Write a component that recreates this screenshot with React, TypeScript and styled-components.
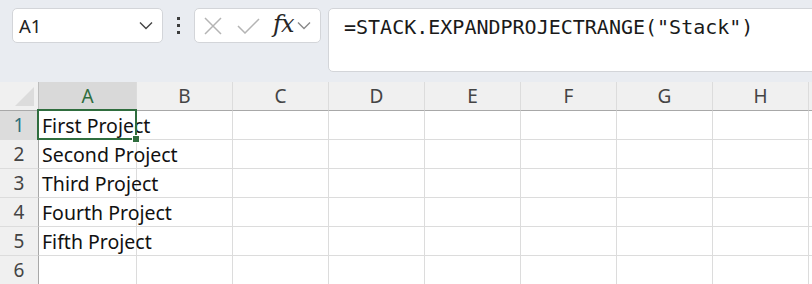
import React from 'react';
import styled, { createGlobalStyle } from 'styled-components';

const GlobalStyle = createGlobalStyle`
    html, body {
        margin: 0;
        padding: 0;
        background: #ffffff;
        overflow: hidden;
    }
    body {
        font-family: 'Noto Sans', 'Segoe UI', sans-serif;
    }
`;

const COLUMNS = ['A', 'B', 'C', 'D', 'E', 'F', 'G', 'H'];
const ROWS = ['First Project', 'Second Project', 'Third Project', 'Fourth Project', 'Fifth Project', ''];

const ChevronDown = ({ color = '#444' }: { color?: string }) => (
    <svg width="14" height="9" viewBox="0 0 14 9">
        <path d="M1 1.5 L7 7.5 L13 1.5" fill="none" stroke={color} strokeWidth="1.4" />
    </svg>
);

const App = () => {
    return (
        <>
            <GlobalStyle />
            <Page>
                <Toolbar>
                    <NameBox>
                        <span>A1</span>
                        <ChevronDown />
                    </NameBox>
                    <Dots>
                        <i />
                        <i />
                        <i />
                    </Dots>
                    <FormulaControls>
                        <svg width="18" height="18" viewBox="0 0 18 18">
                            <path d="M1 1 L17 17 M17 1 L1 17" stroke="#b4b4b4" strokeWidth="1.5" fill="none" />
                        </svg>
                        <svg width="23" height="16" viewBox="0 0 23 16">
                            <path d="M1 8 L8 15 L22 1" stroke="#b4b4b4" strokeWidth="1.5" fill="none" />
                        </svg>
                        <Fx>fx</Fx>
                        <ChevronDown color="#8a8a8a" />
                    </FormulaControls>
                    <FormulaInput>=STACK.EXPANDPROJECTRANGE("Stack")</FormulaInput>
                </Toolbar>

                <Sheet>
                    <Corner>
                        <Triangle />
                    </Corner>
                    {COLUMNS.map((col) => (
                        <ColHeader key={col} $active={col === 'A'}>
                            {col}
                        </ColHeader>
                    ))}
                    <ColHeader />
                    {ROWS.map((text, r) => (
                        <React.Fragment key={r}>
                            <RowHeader $active={r === 0}>{r + 1}</RowHeader>
                            {COLUMNS.map((col) => (
                                <Cell key={col}>
                                    {col === 'A' && text}
                                    {col === 'A' && r === 0 && (
                                        <Selection>
                                            <Handle />
                                        </Selection>
                                    )}
                                </Cell>
                            ))}
                            <Cell />
                        </React.Fragment>
                    ))}
                </Sheet>
            </Page>
        </>
    );
};

const Page = styled.div`
    width: 812px;
    height: 284px;
    overflow: hidden;
    display: flex;
    flex-direction: column;
`;

const Toolbar = styled.div`
    height: 82px;
    box-sizing: border-box;
    padding: 8px 0 0 12px;
    background: #e9ecf1;
    display: flex;
    align-items: flex-start;
    flex-shrink: 0;

    & > * {
        flex-shrink: 0;
    }
`;

const NameBox = styled.div`
    width: 151px;
    height: 35px;
    box-sizing: border-box;
    background: #fff;
    border: 1px solid #d3d5d9;
    border-radius: 5px;
    display: flex;
    align-items: center;
    justify-content: space-between;
    padding: 0 9px 0 6px;

    span {
        font-size: 18.5px;
        color: #222;
    }
`;

const Dots = styled.div`
    width: 31px;
    height: 35px;
    display: flex;
    flex-direction: column;
    align-items: center;
    justify-content: center;
    gap: 4px;

    i {
        display: block;
        width: 3px;
        height: 3px;
        background: #3c3c3c;
    }
`;

const FormulaControls = styled.div`
    width: 127px;
    height: 35px;
    box-sizing: border-box;
    background: #fff;
    border: 1px solid #d3d5d9;
    border-radius: 5px;
    display: flex;
    align-items: center;
    padding: 0 4px 0 9px;

    svg:nth-child(1) {
        margin-right: 15px;
    }
    svg:nth-child(2) {
        margin-right: 13px;
    }
`;

const Fx = styled.span`
    font-family: 'DejaVu Serif', 'Liberation Serif', serif;
    font-style: italic;
    font-size: 24px;
    color: #262626;
    margin-right: 4px;
    line-height: 1;
    padding-bottom: 3px;
    letter-spacing: -1px;
`;

const FormulaInput = styled.div`
    margin-left: 7px;
    width: 520px;
    height: 64px;
    box-sizing: border-box;
    background: #fff;
    border: 1px solid #d3d5d9;
    border-radius: 5px;
    padding: 6px 0 0 15px;
    font-family: 'DejaVu Sans Mono', 'Liberation Mono', monospace;
    font-size: 20px;
    color: #1a1a1a;
    white-space: nowrap;
`;

const Sheet = styled.div`
    display: grid;
    grid-template-columns: 39px 98px repeat(7, 96px) 1fr;
    grid-auto-rows: 29px;
    grid-template-rows: 29px;
    background: #fff;
`;

const HeaderBase = styled.div`
    background: #f0f0f0;
    box-sizing: border-box;
    display: flex;
    align-items: center;
    justify-content: center;
    font-size: 19px;
    color: #444;
`;

const Corner = styled(HeaderBase)`
    position: relative;
    border-right: 1px solid #bdbdbd;
    border-bottom: 1px solid #a8a8a8;
`;

const Triangle = styled.div`
    position: absolute;
    right: 4px;
    bottom: 4px;
    width: 0;
    height: 0;
    border-left: 19px solid transparent;
    border-bottom: 19px solid #dcdcdc;
`;

const ColHeader = styled(HeaderBase)<{ $active?: boolean }>`
    border-right: 1px solid #dcdcdc;
    border-bottom: ${({ $active }) => ($active ? '2px solid #2f6d3e' : '1px solid #a8a8a8')};
    background: ${({ $active }) => ($active ? '#d9d9d9' : '#f0f0f0')};
    color: ${({ $active }) => ($active ? '#2f6d3e' : '#444')};
    padding-top: ${({ $active }) => ($active ? '1px' : '0')};
`;

const RowHeader = styled(HeaderBase)<{ $active?: boolean }>`
    border-right: 1px solid #a8a8a8;
    border-bottom: 1px solid #dcdcdc;
    background: ${({ $active }) => ($active ? '#dcdcdc' : '#f0f0f0')};
    color: ${({ $active }) => ($active ? '#2d6f7a' : '#444')};
`;

const Cell = styled.div`
    position: relative;
    box-sizing: border-box;
    border-right: 1px solid #dcdcdc;
    border-bottom: 1px solid #dcdcdc;
    padding: 0 0 0 3px;
    display: flex;
    align-items: center;
    font-size: 19.5px;
    color: #111;
    white-space: nowrap;
    overflow: visible;
`;

const Selection = styled.div`
    position: absolute;
    left: -2px;
    top: -2px;
    right: -1px;
    bottom: -1px;
    border: 2px solid #2f6d3e;
    z-index: 2;
    pointer-events: none;
`;

const Handle = styled.div`
    position: absolute;
    right: -5px;
    bottom: -5px;
    width: 6px;
    height: 6px;
    background: #2f6d3e;
    border: 1px solid #fff;
`;

export default App;
